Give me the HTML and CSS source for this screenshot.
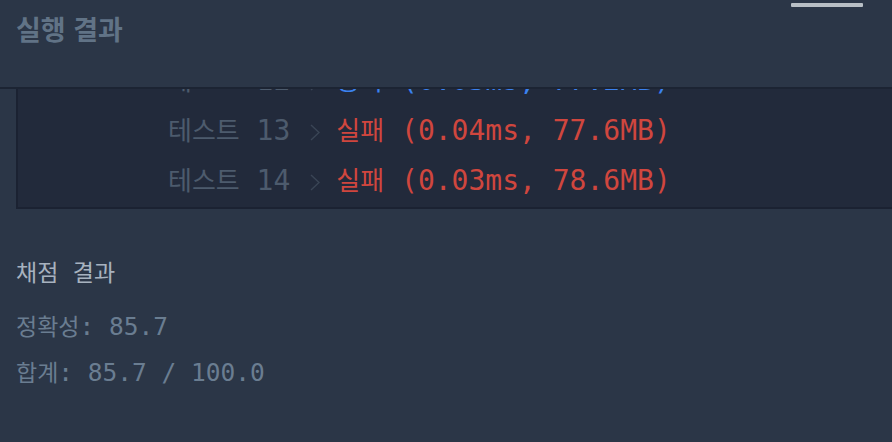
FILE: index.html
```html
<!DOCTYPE html>
<html lang="ko">
<head>
<meta charset="utf-8">
<title>실행 결과</title>
<link rel="stylesheet" href="styles.css">
</head>
<body>
<div class="page">
  <div class="handle"></div>
  <header class="header">
    <h1 class="title">실행 결과</h1>
  </header>
  <section class="console">
    <div class="rows">
      <div class="row">
        <span class="label"><span class="ko">테스트</span> 12</span>
        <svg class="chev" width="10" height="17" viewBox="0 0 10 17"><polyline points="1,1 9,8.5 1,16" fill="none" stroke="currentColor" stroke-width="1.4"/></svg>
        <span class="result pass"><span class="ko">통과</span> (0.03ms, 77.2MB)</span>
      </div>
      <div class="row">
        <span class="label"><span class="ko">테스트</span> 13</span>
        <svg class="chev" width="10" height="17" viewBox="0 0 10 17"><polyline points="1,1 9,8.5 1,16" fill="none" stroke="currentColor" stroke-width="1.4"/></svg>
        <span class="result fail"><span class="ko">실패</span> (0.04ms, 77.6MB)</span>
      </div>
      <div class="row">
        <span class="label"><span class="ko">테스트</span> 14</span>
        <svg class="chev" width="10" height="17" viewBox="0 0 10 17"><polyline points="1,1 9,8.5 1,16" fill="none" stroke="currentColor" stroke-width="1.4"/></svg>
        <span class="result fail"><span class="ko">실패</span> (0.03ms, 78.6MB)</span>
      </div>
    </div>
  </section>
  <section class="summary">
    <h2 class="summary-title"><span class="ko">채점</span> <span class="ko">결과</span></h2>
    <p class="line"><span class="ko">정확성</span>: 85.7</p>
    <p class="line"><span class="ko">합계</span>: 85.7 / 100.0</p>
  </section>
</div>
</body>
</html>
```

FILE: styles.css
```css
html, body {
  margin: 0;
  padding: 0;
  background: #2b3647;
}

.page {
  position: relative;
  width: 892px;
  height: 442px;
  overflow: hidden;
  background: #2b3647;
}

.handle {
  position: absolute;
  top: 3px;
  left: 791px;
  width: 72px;
  height: 4px;
  background: #b8bfc5;
  border-radius: 1px;
}

.header {
  height: 87px;
  border-bottom: 2px solid #1c2433;
  padding-left: 16px;
}

.title {
  margin: 0;
  font-family: "Noto Sans CJK KR", sans-serif;
  font-weight: 700;
  font-size: 27px;
  line-height: 58px;
  color: #617386;
}

.console {
  margin-left: 16px;
  height: 118px;
  overflow: hidden;
  background: #222a3b;
  border-left: 2px solid #1b2232;
  border-bottom: 2px solid #1b2232;
}

.rows {
  margin-top: -33.5px;
  padding-left: 150px;
}

.row {
  display: flex;
  align-items: flex-start;
  height: 50px;
  font-family: "DejaVu Sans Mono", monospace;
  font-size: 28px;
  line-height: 50px;
}

.label,
.result {
  white-space: pre;
}

.row .ko {
  font-family: "Noto Sans CJK KR", sans-serif;
  font-size: 26px;
  line-height: 1;
}

.label {
  color: #4d5b6d;
}

.chev {
  flex: none;
  margin: 18px 16px 0 20px;
  color: #3a4556;
}

.fail {
  color: #d0463e;
}

.pass {
  color: #3b82f0;
}

.summary {
  padding: 41px 16px 0;
  font-family: "DejaVu Sans Mono", monospace;
  font-size: 24.5px;
}

.summary .ko {
  font-family: "Noto Sans CJK KR", sans-serif;
  font-size: 23px;
  line-height: 1;
}

.summary-title {
  margin: 0 0 8px;
  font-weight: 400;
  font-size: 24px;
  line-height: 46px;
  white-space: pre;
  color: #a7b2bf;
}

.line {
  margin: 0;
  line-height: 46px;
  white-space: pre;
  color: #6a7d91;
}
```
